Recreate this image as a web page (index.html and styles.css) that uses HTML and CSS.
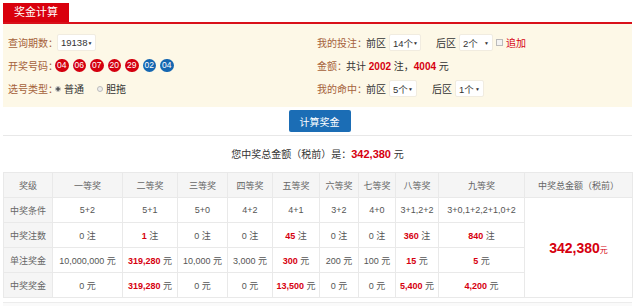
FILE: index.html
```html
<!DOCTYPE html>
<html lang="zh-CN">
<head>
    <meta charset="UTF-8">
    <title>奖金计算</title>
    <link rel="stylesheet" href="styles.css">
</head>
<body>
    <div class="wrap">
        <div class="tab-head">
            <span class="tab">奖金计算</span>
        </div>

        <div class="panel">
            <div class="col">
                <div class="row">
                    <span class="label">查询期数：</span>
                    <span class="select w39">19138 <i>▼</i></span>
                </div>
                <div class="row">
                    <span class="label">开奖号码：</span>
                    <span class="balls">
                        <b class="ball red">04</b>
                        <b class="ball red">06</b>
                        <b class="ball red">07</b>
                        <b class="ball red">20</b>
                        <b class="ball red">29</b>
                        <b class="ball blue">02</b>
                        <b class="ball blue">04</b>
                    </span>
                </div>
                <div class="row">
                    <span class="label">选号类型：</span>
                    <span class="radio on"></span><span class="opt">普通</span>
                    <span class="radio"></span><span class="opt">胆拖</span>
                </div>
            </div>
            <div class="col right">
                <div class="row">
                    <span class="label">我的投注：</span>
                    <span class="zone">前区</span>
                    <span class="select w32">14个 <i>▼</i></span>
                    <span class="zone gap">后区</span>
                    <span class="select w34">2个 <i>▼</i></span>
                    <span class="check"></span><span class="add">追加</span>
                </div>
                <div class="row">
                    <span class="label short">金额：</span>
                    <span class="zone">共计 <em>2002</em> 注，<em>4004</em> 元</span>
                </div>
                <div class="row">
                    <span class="label">我的命中：</span>
                    <span class="zone">前区</span>
                    <span class="select w28">5个 <i>▼</i></span>
                    <span class="zone gap">后区</span>
                    <span class="select w29">1个 <i>▼</i></span>
                </div>
            </div>
        </div>

        <div class="actions">
            <button class="calc-button">计算奖金</button>
        </div>

        <div class="summary">您中奖总金额（税前）是：<strong>342,380</strong> 元</div>

        <table class="prize">
            <colgroup>
                <col style="width:49px"><col style="width:70px"><col style="width:55px">
                <col style="width:50px"><col style="width:45px"><col style="width:47px">
                <col style="width:39px"><col style="width:37px"><col style="width:43px">
                <col style="width:86px"><col style="width:108px">
            </colgroup>
            <tr class="head">
                <th>奖级</th><th>一等奖</th><th>二等奖</th><th>三等奖</th><th>四等奖</th><th>五等奖</th>
                <th>六等奖</th><th>七等奖</th><th>八等奖</th><th>九等奖</th><th>中奖总金额（税前）</th>
            </tr>
            <tr>
                <th>中奖条件</th><td>5+2</td><td>5+1</td><td>5+0</td><td>4+2</td><td>4+1</td>
                <td>3+2</td><td>4+0</td><td>3+1,2+2</td><td>3+0,1+2,2+1,0+2</td>
                <td rowspan="4" class="total"><strong>342,380</strong>元</td>
            </tr>
            <tr>
                <th>中奖注数</th><td>0 注</td><td><em>1</em> 注</td><td>0 注</td><td>0 注</td><td><em>45</em> 注</td>
                <td>0 注</td><td>0 注</td><td><em>360</em> 注</td><td><em>840</em> 注</td>
            </tr>
            <tr>
                <th>单注奖金</th><td>10,000,000 元</td><td><em>319,280</em> 元</td><td>10,000 元</td><td>3,000 元</td><td><em>300</em> 元</td>
                <td>200 元</td><td>100 元</td><td><em>15</em> 元</td><td><em>5</em> 元</td>
            </tr>
            <tr>
                <th>中奖奖金</th><td>0 元</td><td><em>319,280</em> 元</td><td>0 元</td><td>0 元</td><td><em>13,500</em> 元</td>
                <td>0 元</td><td>0 元</td><td><em>5,400</em> 元</td><td><em>4,200</em> 元</td>
            </tr>
        </table>

        <div class="next-box"></div>
    </div>
</body>
</html>
```

FILE: styles.css
```css
* {
    margin: 0;
    padding: 0;
    box-sizing: border-box;
}

body {
    font-family: "Liberation Sans", Arial, "Noto Sans CJK SC", sans-serif;
    font-size: 10px;
    color: #333;
    background: white;
}

.wrap {
    width: 629px;
    margin-left: 3px;
    padding-top: 3px;
}

.tab-head {
    height: 21px;
    border-bottom: 2px solid #d9101a;
}

.tab {
    display: inline-block;
    width: 66px;
    height: 19px;
    line-height: 19px;
    background: #d9000d;
    color: white;
    font-size: 11px;
    text-align: center;
}

.panel {
    display: flex;
    background: #fdf8e7;
    padding: 7px 0 7px 5px;
    height: 83px;
}

.col {
    width: 309px;
}

.col.right {
    width: 315px;
}

.row {
    display: flex;
    align-items: center;
    height: 23px;
    white-space: nowrap;
}

.label {
    color: #a5613a;
    width: 49px;
}

.label.short {
    width: 29px;
}

.select {
    display: inline-flex;
    align-items: center;
    justify-content: space-between;
    height: 17px;
    padding: 0 3px;
    background: white;
    border: 1px solid #f1ece0;
    border-radius: 2px;
    font-size: 9.5px;
}

.select i {
    font-style: normal;
    font-size: 5px;
}

.w39 { width: 39px; }
.w32 { width: 32px; }
.w34 { width: 34px; }
.w28 { width: 28px; }
.w29 { width: 29px; }

.balls {
    display: flex;
    gap: 4px;
    margin-left: -2px;
}

.ball {
    width: 13.5px;
    height: 13.5px;
    border-radius: 50%;
    color: white;
    font-size: 8.5px;
    font-weight: normal;
    line-height: 13.5px;
    text-align: center;
}

.ball.red { background: #d4000f; }
.ball.blue { background: #1567b1; }

.radio {
    width: 6px;
    height: 6px;
    border-radius: 50%;
    border: 1px solid #bbb;
    background: #eee;
    margin: 0 3px 0 -2px;
}

.radio.on {
    background: radial-gradient(circle, #555 0 1.5px, #eee 2px);
}

.opt {
    margin-right: 15px;
}

.zone {
    margin-right: 3px;
}

.zone.gap {
    margin-left: 15px;
}

.zone em,
.prize em {
    color: #d6000f;
    font-style: normal;
    font-weight: bold;
}

.check {
    width: 7px;
    height: 7px;
    border: 1px solid #bbb;
    background: #f3f3f3;
    margin: 0 3px 0 3px;
}

.add {
    color: #d6000f;
}

.actions {
    display: flex;
    justify-content: center;
    padding: 3px 0 3px 4px;
    border-bottom: 1px solid #e8e8e8;
}

.calc-button {
    width: 62px;
    height: 22px;
    background: #1b6db5;
    color: white;
    border: none;
    border-radius: 2px;
    font-family: inherit;
    font-size: 10px;
}

.summary {
    height: 36px;
    line-height: 36px;
    text-align: center;
    font-size: 10px;
    color: #333;
}

.summary strong {
    color: #d6000f;
    font-size: 11px;
}

.prize {
    width: 629px;
    border-collapse: collapse;
    table-layout: fixed;
    color: #555;
    font-size: 9px;
}

.prize th,
.prize td {
    height: 25px;
    border: 1px solid #e9e9e9;
    text-align: center;
    font-weight: normal;
    white-space: nowrap;
}

.prize th {
    background: #f5f5f5;
    color: #666;
}

.prize .total {
    color: #d6000f;
    font-size: 8px;
}

.prize .total strong {
    font-size: 14px;
}

.next-box {
    margin-top: 4px;
    height: 10px;
    border-top: 1px solid #ececec;
    background: #fafafa;
}
```
